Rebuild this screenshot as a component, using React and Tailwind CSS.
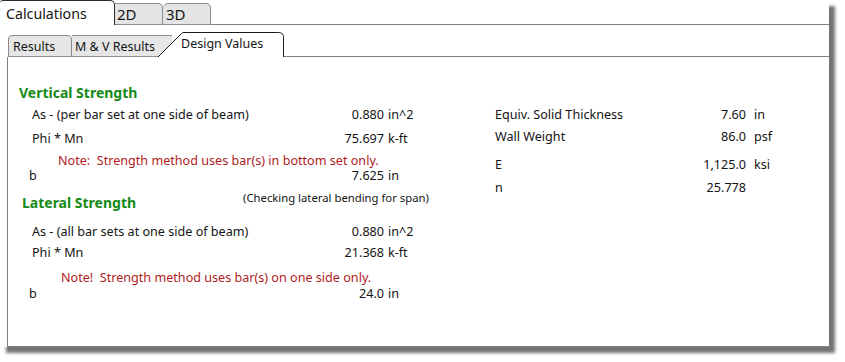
import React from 'react';

const Row = ({ label, num, unit, x = 24, lw, nw, gap = 4, className = '' }) => (
  <div className={`flex h-[16px] leading-[16px] ${className}`} style={{ paddingLeft: x }}>
    <div className="whitespace-nowrap" style={{ width: lw }}>{label}</div>
    <div className="text-right" style={{ width: nw }}>{num}</div>
    {unit && <div style={{ marginLeft: gap }}>{unit}</div>}
  </div>
);

export default function App() {
  return (
    <div className="w-[845px] h-[362px] bg-white font-['Noto_Sans',sans-serif] text-[#141414]">
      <div className="w-[829px] h-[347px] bg-white shadow-[6px_6px_3px_rgba(0,0,0,0.55)] flex flex-col">
        {/* outer tabs */}
        <div className="flex items-end h-[25px] shrink-0">
          <div className="w-[115px] h-[25px] border-t border-r border-[#2b2b2b] rounded-tr-[5px] rounded-tl-[3px] pl-[6px] pt-[2px] text-[14.2px] leading-[21px]">
            Calculations
          </div>
          <div className="w-[48px] h-[22px] bg-[#e4e4e4] border-t border-r border-b border-[#8c8c8c] rounded-tr-[5px] pl-[2px] text-[15px] leading-[21px]">
            2D
          </div>
          <div className="w-[48px] h-[22px] bg-[#e4e4e4] border-t border-r border-b border-[#8c8c8c] rounded-t-[5px] pl-[3px] text-[15px] leading-[21px]">
            3D
          </div>
          <div className="flex-1 border-b border-[#808080]"></div>
        </div>

        <div className="flex-1 flex flex-col pl-[7px] pt-[7px]">
          {/* inner tabs */}
          <div className="flex items-end h-[25px] shrink-0 text-[12.5px]">
            <div className="ml-[1px] w-[64px] h-[22px] bg-[#e6e6e6] border border-[#8c8c8c] rounded-t-[4px] pl-[4px] leading-[21px]">
              Results
            </div>
            <div className="w-[100px] h-[22px] bg-[#e6e6e6] border-t border-b border-[#8c8c8c] pl-[3px] leading-[21px] whitespace-nowrap">
              M &amp; V Results
            </div>
            <div className="relative w-[126px] h-[25px] ml-[-14px] pl-[23px] leading-[24px] whitespace-nowrap">
              <svg className="absolute inset-0" width="126" height="25" viewBox="0 0 126 25">
                <path d="M0 25 L23.5 1.5 Q24.5 0.5 26 0.5 L120.5 0.5 Q125.5 0.5 125.5 5.5 L125.5 25" fill="white" stroke="#1a1a1a" strokeWidth="1" />
              </svg>
              <span className="relative">Design Values</span>
            </div>
            <div className="flex-1 h-[25px] border-b border-[#808080]"></div>
          </div>

          {/* panel */}
          <div className="flex-1 flex border-l border-b border-[#808080] text-[12.6px]">
            <div className="w-[480px] flex flex-col">
              <div className="mt-[27px] pl-[11px] h-[18px] leading-[18px] text-[14px] font-bold text-[#168a16]">Vertical Strength</div>
              <Row className="mt-[5px]" label="As - (per bar set at one side of beam)" num="0.880" unit="in^2" lw={290} nw={62} />
              <Row className="mt-[8px]" label="Phi * Mn" num="75.697" unit="k-ft" lw={290} nw={62} />
              <div className="mt-[7px] pl-[50px] h-[14px] leading-[14px] whitespace-nowrap text-[#b01c24]">Note:&nbsp; Strength method uses bar(s) in bottom set only.</div>
              <Row label="b" num="7.625" unit="in" x={21} lw={293} nw={62} />
              <div className="mt-[6px] flex items-start">
                <div className="mt-[4px] pl-[14px] w-[235px] h-[18px] leading-[18px] text-[14px] font-bold text-[#168a16]">Lateral Strength</div>
                <div className="h-[16px] leading-[16px] text-[11.3px] whitespace-nowrap">(Checking lateral bending for span)</div>
              </div>
              <Row className="mt-[12px]" label="As - (all bar sets at one side of beam)" num="0.880" unit="in^2" lw={290} nw={62} />
              <Row className="mt-[5px]" label="Phi * Mn" num="21.368" unit="k-ft" lw={290} nw={62} />
              <div className="mt-[10px] pl-[53px] h-[14px] leading-[14px] whitespace-nowrap text-[#b01c24]">Note!&nbsp; Strength method uses bar(s) on one side only.</div>
              <Row className="mt-[1px]" label="b" num="24.0" unit="in" x={21} lw={293} nw={62} />
            </div>
            <div className="flex flex-col">
              <Row className="mt-[50px]" label="Equiv. Solid Thickness" num="7.60" unit="in" x={7} lw={190} nw={61} gap={8} />
              <Row className="mt-[6px]" label="Wall Weight" num="86.0" unit="psf" x={7} lw={190} nw={61} gap={8} />
              <Row className="mt-[12px]" label="E" num="1,125.0" unit="ksi" x={7} lw={190} nw={61} gap={8} />
              <Row className="mt-[7px]" label="n" num="25.778" x={7} lw={190} nw={61} gap={8} />
            </div>
          </div>
        </div>
      </div>
    </div>
  );
}
